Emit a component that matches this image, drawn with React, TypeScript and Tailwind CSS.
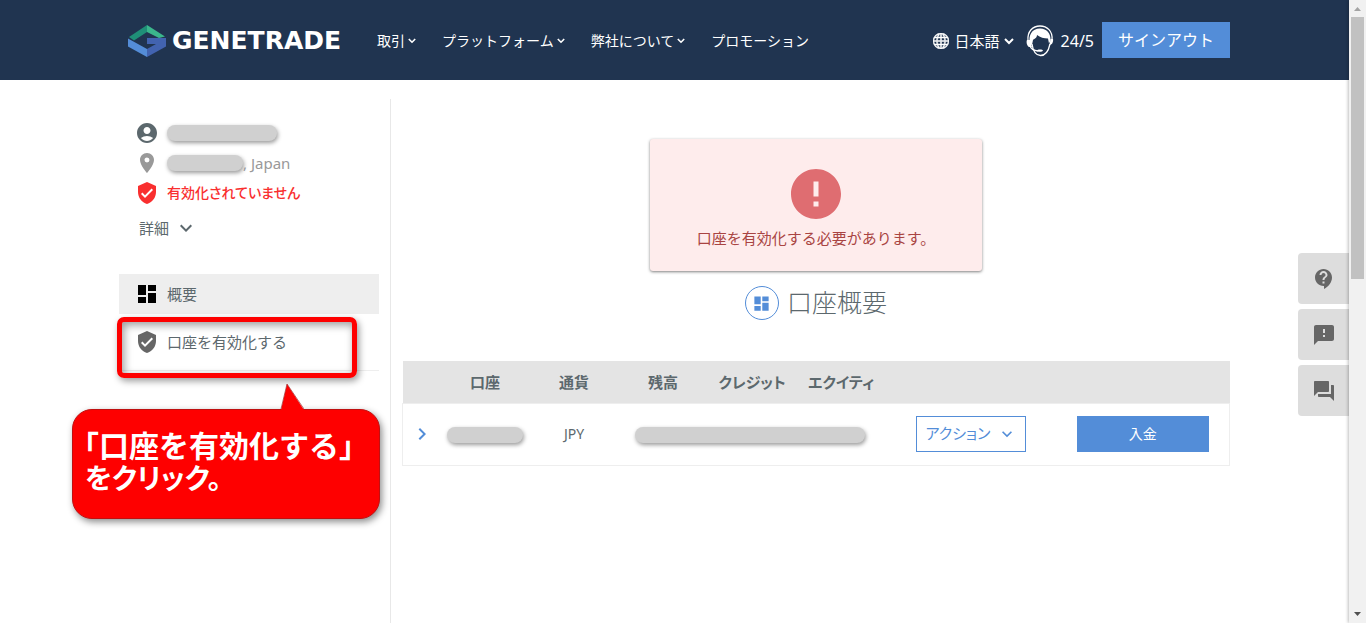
import type { ReactNode } from "react";
import { BsGlobe } from "react-icons/bs";
import {
  MdAccountCircle,
  MdChevronRight,
  MdContactSupport,
  MdDashboard,
  MdError,
  MdExpandMore,
  MdFeedback,
  MdForum,
  MdPlace,
  MdVerifiedUser,
} from "react-icons/md";

const NAV = [
  { label: "取引", menu: true },
  { label: "プラットフォーム", menu: true },
  { label: "弊社について", menu: true },
  { label: "プロモーション", menu: false },
];

const COLUMNS = ["口座", "通貨", "残高", "クレジット", "エクイティ"];

function Caret({ className }: { className: string }) {
  return (
    <svg className={className} viewBox="0 0 10 7" fill="none" stroke="currentColor" strokeWidth={2}>
      <path d="M1 1l4 4 4-4" />
    </svg>
  );
}

function Logo() {
  return (
    <a href="#" className="flex items-center gap-[6px] text-white">
      <svg className="w-[38px] h-8" viewBox="0 0 38 32">
        <path fill="#1f8f78" d="M19 0v7L6 15.500 1 12z" />
        <path fill="#3bb78c" d="M19 0l18 11.500-6 1.500-12-6z" />
        <path fill="#548dd8" d="M0 13.500L19 24v8L0 21.500z" />
        <path fill="#4263b0" d="M19 24l9-5h-9v-6h19v8.500L19 32z" />
      </svg>
      <span className="text-[25px] leading-8 font-bold font-['DejaVu_Sans',sans-serif]">GENETRADE</span>
    </a>
  );
}

function SupportIcon() {
  return (
    <svg className="w-7 h-8" viewBox="0 0 28 32" fill="none" stroke="#fff">
      <path strokeWidth={1.3} d="M2 16C1 6 7 1 14 1s13 5 12 14" />
      <path fill="#fff" stroke="none" d="M4 19C2 10 6 3.500 14 3.500c7 0 11 5 10.500 12l-1.500 3-1-5c-4 0-8-1-11-3.500 0 3-3 4-4 5L6 20z" />
      <path fill="#fff" stroke="none" d="M1 15h3l2 7H3c-2-1-3-5-2-7zM27 14h-2.500L23.500 20c3 0 4-4 3.500-6z" />
      <path strokeWidth={1.3} d="M6 19c1 7 4 11.500 8.500 11.500S22.500 26 24 19" />
      <path strokeWidth={1.3} d="M4 21c1 3 4 4.500 8 5" />
      <path fill="#fff" stroke="none" d="M11 25.500c0-1.500 6-1.500 6 0s-6 2-6 0z" />
    </svg>
  );
}

function Header() {
  return (
    <header className="h-20 bg-[#203450] text-white">
      <div className="max-w-[1111px] h-full mx-auto pt-[2px] pl-[9px] flex items-center">
        <Logo />
        <nav className="ml-9 flex items-center gap-[26px]">
          {NAV.map((item) => (
            <a key={item.label} href="#" className="flex items-center gap-[3px] text-sm whitespace-nowrap">
              {item.label}
              {item.menu && <Caret className="w-2 h-[6px]" />}
            </a>
          ))}
        </nav>
        <div className="ml-auto flex items-center">
          <button className="flex items-center text-[15px] whitespace-nowrap">
            <BsGlobe className="size-4 mr-[6px] stroke-current [stroke-width:0.5]" />
            日本語
            <Caret className="w-[10px] h-[7px] ml-1" />
          </button>
          <a href="#" className="flex items-center gap-[7px] ml-3 text-base">
            <SupportIcon />
            24/5
          </a>
          <button className="ml-2 -mt-[2px] w-32 h-9 bg-[#538dd8] text-base">サインアウト</button>
        </div>
      </div>
    </header>
  );
}

function Pill({ className }: { className: string }) {
  return (
    <span
      className={`inline-block h-4 rounded-full bg-[#d0d0d0] shadow-[1px_2px_4px_rgba(0,0,0,0.4)] ${className}`}
    />
  );
}

function Callout() {
  return (
    <>
      <div className="absolute -left-[2px] top-[3px] w-60 h-[61px] rounded-[7px] border-[5px] border-[#fe0000] shadow-[2px_3px_7px_rgba(0,0,0,0.4),inset_2px_3px_8px_rgba(0,0,0,0.4)]" />
      <div className="absolute -left-[47px] top-[95px] w-[308px] h-[110px] rounded-[20px] border border-[#c01010] bg-[#fe0000] pt-5 font-bold text-white whitespace-nowrap shadow-[2px_3px_7px_rgba(0,0,0,0.45)]">
        <svg className="absolute left-[207px] -top-[26px] w-6 h-7" viewBox="0 0 24 28">
          <path fill="#fe0000" d="M7 0l17 26v2H1v-2z" />
          <path fill="none" stroke="#a03030" strokeWidth={0.7} d="M1 25L7 0l17 25" />
        </svg>
        <p className="-ml-1 text-[30px] leading-8">「口座を有効化する」</p>
        <p className="pl-3 text-[28px] leading-8 [font-feature-settings:'palt']">をクリック。</p>
      </div>
    </>
  );
}

function Sidebar() {
  return (
    <aside className="w-[260px] shrink-0 pt-[38px] text-[15px] text-[#5c686d]">
      <div className="flex items-center h-[30px] px-4 gap-2">
        <MdAccountCircle className="size-6" />
        <Pill className="w-[110px]" />
      </div>
      <div className="flex items-center h-[30px] px-4 gap-2 text-[#999]">
        <MdPlace className="size-6" />
        <span className="flex items-center">
          <Pill className="w-[76px]" />, Japan
        </span>
      </div>
      <div className="flex items-center h-[30px] px-4 gap-2 text-sm font-medium text-[#f92f2f]">
        <MdVerifiedUser className="size-6" />
        <span className="[font-feature-settings:'palt']">有効化されていません</span>
      </div>
      <button className="flex items-center h-10 px-5 gap-[5px]">
        詳細
        <MdExpandMore className="size-6" />
      </button>

      <ul className="mt-[26px] border-b border-[#eee]">
        <li>
          <a href="#" className="flex items-center gap-2 h-10 px-4 bg-[#eee]">
            <MdDashboard className="size-6 text-black" />
            概要
          </a>
        </li>
        <li className="relative">
          <a href="#" className="flex items-center gap-2 h-14 px-4">
            <MdVerifiedUser className="size-6 text-[#666]" />
            口座を有効化する
          </a>
          <Callout />
        </li>
      </ul>
    </aside>
  );
}

function AccountTable() {
  return (
    <table className="mt-[41px] w-full table-fixed border-collapse text-center text-[#5c686d]">
      <colgroup>
        <col className="w-[38px]" />
        {COLUMNS.map((c) => (
          <col key={c} className="w-[89px]" />
        ))}
        <col />
        <col className="w-[173px]" />
      </colgroup>
      <thead>
        <tr className="h-[42px] bg-[#e4e4e4] text-[15px]">
          <th />
          {COLUMNS.map((c) => (
            <th key={c} className="p-0 font-bold whitespace-nowrap [font-feature-settings:'palt']">
              {c}
            </th>
          ))}
          <th />
          <th />
        </tr>
      </thead>
      <tbody>
        <tr className="h-[62px] border border-[#eee] text-sm">
          <td className="p-0">
            <button className="block mx-auto" aria-label="詳細">
              <MdChevronRight className="size-6 text-[#538dd8]" />
            </button>
          </td>
          <td className="p-0">
            <Pill className="w-[76px] align-middle" />
          </td>
          <td className="p-0">JPY</td>
          <td className="p-0" colSpan={3}>
            <Pill className="w-[230px] mr-1 align-middle" />
          </td>
          <td className="p-0">
            <button className="inline-flex items-center justify-center gap-[6px] w-[110px] h-9 align-middle border border-[#538dd8] text-[#538dd8] whitespace-nowrap">
              <span className="text-[15px] [font-feature-settings:'palt']">アクション</span>
              <MdExpandMore className="size-5" />
            </button>
          </td>
          <td className="p-0">
            <button className="w-[132px] h-9 align-middle bg-[#538dd8] text-white">入金</button>
          </td>
        </tr>
      </tbody>
    </table>
  );
}

function SideTab({ label, children }: { label: string; children: ReactNode }) {
  return (
    <button
      aria-label={label}
      className="flex items-center justify-center w-[51px] h-[51px] rounded-l-[4px] bg-[#ddd] text-[#666]"
    >
      {children}
    </button>
  );
}

function Scrollbar() {
  return (
    <div className="w-[17px] shrink-0 flex flex-col items-center bg-[#f1f1f1] shadow-[-1px_0_3px_rgba(0,0,0,0.25)] z-10">
      <svg className="w-[17px] h-[17px]" viewBox="0 0 17 17">
        <path fill="#a3a3a3" d="M5 11l3.500-4 3.500 4z" />
      </svg>
      <div className="w-[13px] h-[262px] bg-[#c1c1c1]" />
      <svg className="w-[17px] h-[17px] mt-auto" viewBox="0 0 17 17">
        <path fill="#505050" d="M5 6l3.500 4L12 6z" />
      </svg>
    </div>
  );
}

export default function App() {
  return (
    <div className="flex h-screen overflow-hidden bg-white font-['Noto_Sans','Noto_Sans_CJK_JP',sans-serif]">
      <div className="relative flex-1 min-w-0 flex flex-col">
        <Header />
        <div className="flex-1 w-full max-w-[1111px] mx-auto flex">
          <Sidebar />
          <main className="flex-1 min-w-0 mt-[19px] ml-[11px] pl-[11px] border-l border-[#e8e8e8]">
            <div className="mt-10 mx-auto w-[332px] h-[132px] rounded-[3px] bg-[#feecec] shadow-[0_1px_3px_rgba(0,0,0,0.5)] flex flex-col items-center pt-[25px]">
              <MdError className="size-[60px] text-[#df6d71]" />
              <p className="text-[15px] leading-7 text-[#a94442] whitespace-nowrap">
                口座を有効化する必要があります。
              </p>
            </div>
            <h1 className="mt-[15px] flex items-center justify-center gap-2 h-[34px] text-[25px] font-light text-[#5c686d]">
              <span className="flex items-center justify-center size-[34px] rounded-full border border-[#538dd8]">
                <MdDashboard className="size-[19px] text-[#538dd8]" />
              </span>
              口座概要
            </h1>
            <AccountTable />
          </main>
        </div>
        <div className="absolute right-0 top-[253px] flex flex-col gap-[5px]">
          <SideTab label="ヘルプ">
            <MdContactSupport className="size-6" />
          </SideTab>
          <SideTab label="フィードバック">
            <MdFeedback className="size-6" />
          </SideTab>
          <SideTab label="チャット">
            <MdForum className="size-6" />
          </SideTab>
        </div>
      </div>
      <Scrollbar />
    </div>
  );
}
